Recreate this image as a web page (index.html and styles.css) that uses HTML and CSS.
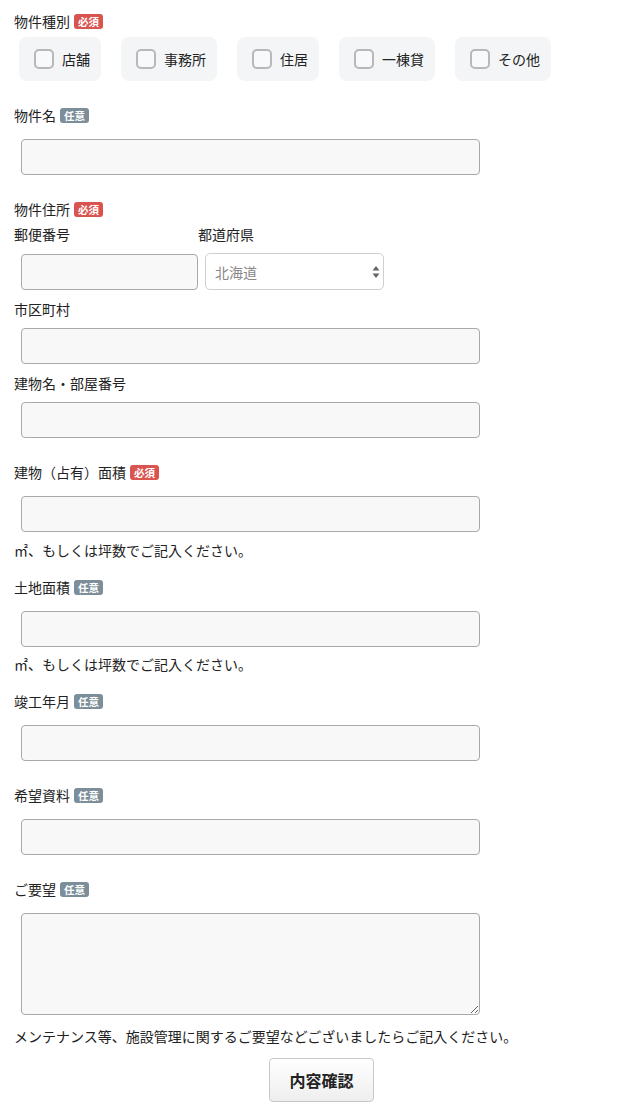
FILE: index.html
```html
<!DOCTYPE html>
<html lang="ja">
<head>
<meta charset="utf-8">
<link rel="stylesheet" href="styles.css">
</head>
<body>
<form class="form">
  <div class="label first">物件種別 <span class="badge req">必須</span></div>
  <div class="choices">
    <label class="pill"><input type="checkbox" class="cb"><span>店舗</span></label>
    <label class="pill"><input type="checkbox" class="cb"><span>事務所</span></label>
    <label class="pill"><input type="checkbox" class="cb"><span>住居</span></label>
    <label class="pill"><input type="checkbox" class="cb"><span>一棟貸</span></label>
    <label class="pill"><input type="checkbox" class="cb"><span>その他</span></label>
  </div>

  <div class="label sec">物件名 <span class="badge opt">任意</span></div>
  <input class="field" type="text">

  <div class="label sec">物件住所 <span class="badge req">必須</span></div>
  <div class="addr-row">
    <div class="addr-col zip">
      <div class="label sub">郵便番号</div>
      <input class="field small" type="text">
    </div>
    <div class="addr-col pref">
      <div class="label sub">都道府県</div>
      <div class="select-wrap">
        <select class="select"><option>北海道</option></select>
        <svg class="arrows" width="8" height="14" viewBox="0 0 8 14"><path d="M4 1 L7.5 5.5 H0.5 Z M4 13 L7.5 8.5 H0.5 Z" fill="#666"/></svg>
      </div>
    </div>
  </div>
  <div class="label sub2">市区町村</div>
  <input class="field" type="text">
  <div class="label sub2">建物名・部屋番号</div>
  <input class="field" type="text">

  <div class="label sec">建物（占有）面積 <span class="badge req">必須</span></div>
  <input class="field" type="text">
  <p class="help">㎡、もしくは坪数でご記入ください。</p>

  <div class="label after-help">土地面積 <span class="badge opt">任意</span></div>
  <input class="field" type="text">
  <p class="help help2">㎡、もしくは坪数でご記入ください。</p>

  <div class="label after-help">竣工年月 <span class="badge opt">任意</span></div>
  <input class="field" type="text">

  <div class="label sec">希望資料 <span class="badge opt">任意</span></div>
  <input class="field" type="text">

  <div class="label sec">ご要望 <span class="badge opt">任意</span></div>
  <textarea class="field area"></textarea>
  <p class="help help3">メンテナンス等、施設管理に関するご要望などございましたらご記入ください。</p>

  <div class="actions">
    <button type="button" class="submit">内容確認</button>
  </div>
</form>
</body>
</html>
```

FILE: styles.css
```css
html, body {
  margin: 0;
  padding: 0;
  background: #ffffff;
}
body {
  font-family: "Noto Sans CJK JP", "Noto Sans", "Liberation Sans", sans-serif;
  font-size: 14px;
  color: #222;
}
.form {
  padding: 11px 0 8px 14px;
  display: flex;
  flex-direction: column;
  align-items: flex-start;
}
.label {
  height: 20px;
  line-height: 20px;
  display: flex;
  align-items: center;
  gap: 4px;
  white-space: nowrap;
}
.label.sec { margin-top: 24px; }
.label.sub { margin-top: 5px; }
.label.sub2 { margin-top: 9px; }
.label.after-help { margin-top: 17px; }

.badge {
  display: inline-block;
  height: 15px;
  line-height: 15px;
  padding: 0 4px;
  border-radius: 3px;
  color: #fff;
  font-size: 10.5px;
  font-weight: 700;
  letter-spacing: 0;
}
.badge.req { background: #d9534f; }
.badge.opt { background: #7b8e99; }

.choices {
  display: flex;
  gap: 20px;
  margin: 6px 0 0 5px;
}
.pill {
  display: flex;
  align-items: center;
  gap: 8px;
  height: 44px;
  padding: 0 11px 0 15px;
  background: #f4f5f7;
  border-radius: 8px;
  box-sizing: border-box;
}
.cb {
  -webkit-appearance: none;
  appearance: none;
  margin: 0;
  width: 20px;
  height: 20px;
  border: 2px solid #b8b8b8;
  border-radius: 5px;
  background: #f8f9fa;
  box-sizing: border-box;
}

.field {
  display: block;
  box-sizing: border-box;
  width: 459px;
  height: 36px;
  margin: 14px 0 0 7px;
  background: #f8f8f8;
  border: 1px solid #a9a9a9;
  border-radius: 4px;
  font: inherit;
  padding: 0 8px;
}
.label.sub2 + .field { margin-top: 9px; }
.field.area {
  height: 102px;
  resize: vertical;
}

.addr-row {
  display: flex;
  align-items: flex-start;
}
.addr-col.zip { width: 184px; }
.addr-col.pref { width: 190px; }
.field.small {
  width: 177px;
  margin-top: 10px;
}
.select-wrap {
  position: relative;
  width: 179px;
  margin: 9px 0 0 7px;
}
.select {
  -webkit-appearance: none;
  appearance: none;
  display: block;
  width: 179px;
  height: 37px;
  box-sizing: border-box;
  border: 1px solid #cfcfcf;
  border-radius: 5px;
  background: #fff;
  color: #888;
  font: inherit;
  font-size: 14px;
  padding: 0 9px;
}
.arrows {
  position: absolute;
  right: 4px;
  top: 12px;
}

.help {
  margin: 8px 0 0 0;
  height: 20px;
  line-height: 20px;
}
.help.help2 { margin-top: 7px; }
.help.help3 { margin-top: 11px; }

.actions {
  align-self: stretch;
  display: flex;
  justify-content: center;
  padding-left: 8px;
  margin-top: 12px;
}
.submit {
  width: 105px;
  height: 44px;
  border: 1px solid #c8c8c8;
  border-radius: 4px;
  background: linear-gradient(#ffffff, #eeeeee);
  font-family: inherit;
  font-size: 16px;
  font-weight: 700;
  color: #222;
}
```
